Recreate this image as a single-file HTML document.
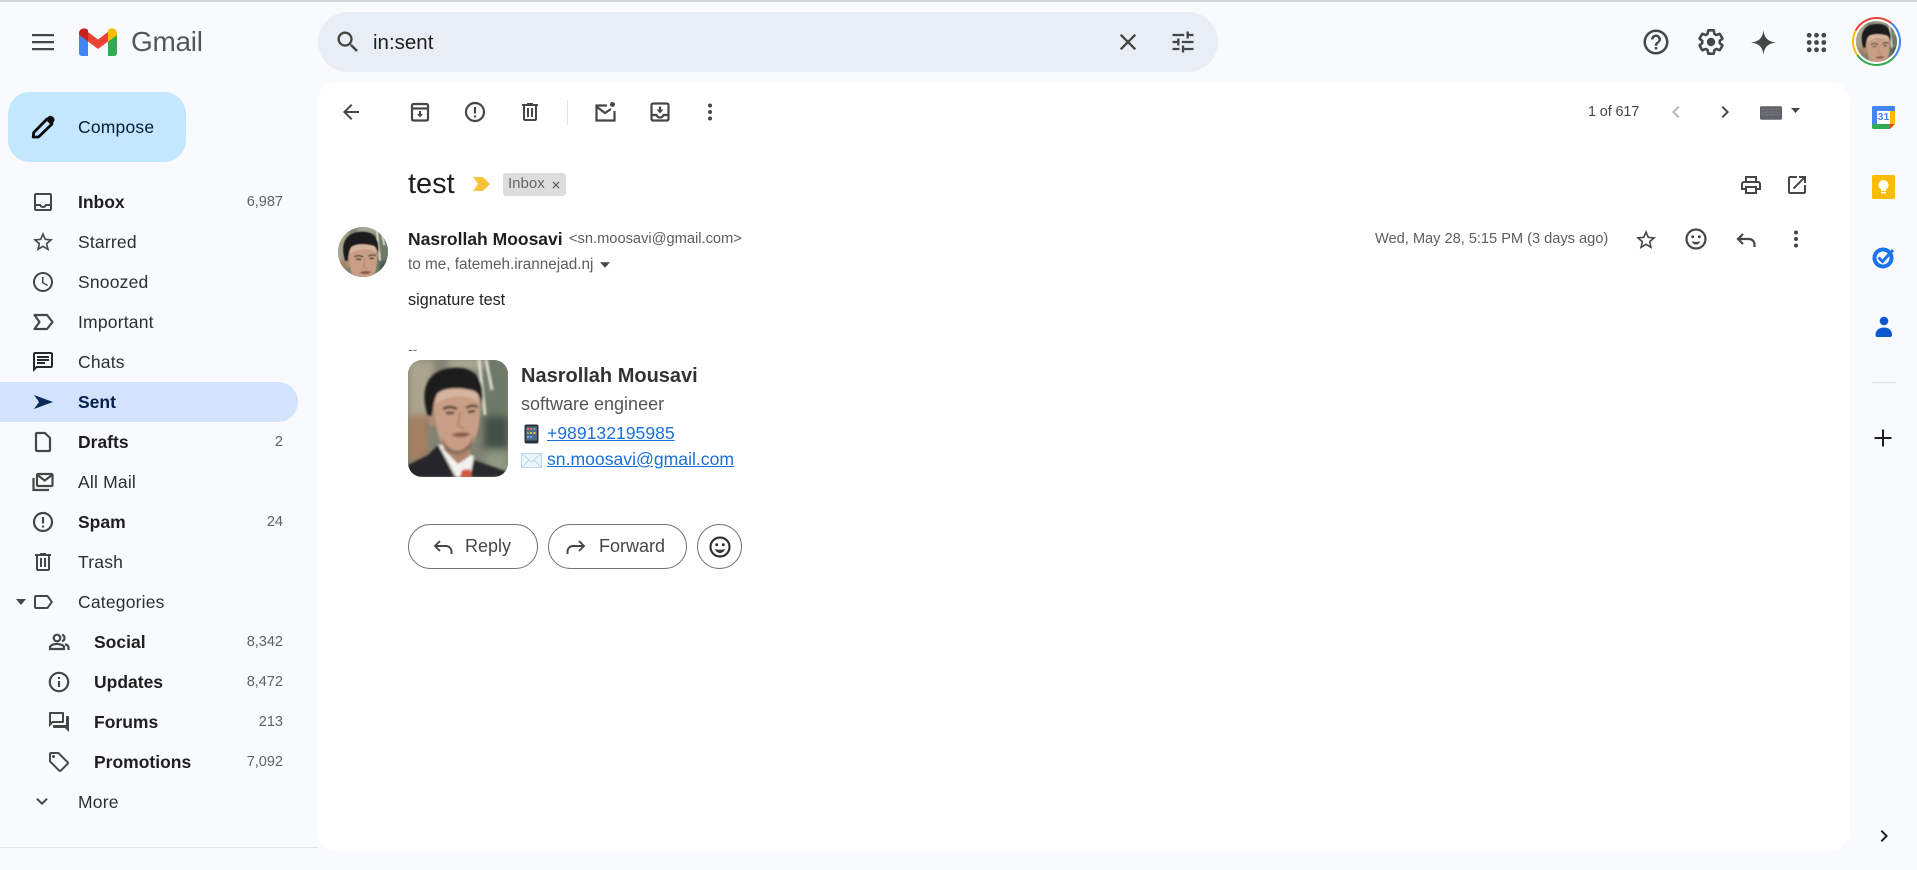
<!DOCTYPE html>
<html lang="en"><head><meta charset="utf-8"><title>Gmail</title>
<style>
html,body{margin:0;padding:0;width:1917px;height:870px;overflow:hidden;background:#f8fafd;font-family:"Liberation Sans",Arial,sans-serif;color:#1f1f1f}
#w{position:absolute;left:0;top:0;width:1917px;height:870px;overflow:hidden;filter:blur(.3px)}
.a{position:absolute}
svg.i{position:absolute;width:24px;height:24px;fill:#444746}
svg.s{fill:none;stroke:#444746;stroke-width:2.2}
.n{position:absolute;left:78px;height:40px;line-height:40px;font-size:17.5px;letter-spacing:.2px;color:#2c2e30;white-space:nowrap}
.b{font-weight:bold;letter-spacing:0;color:#1f1f1f}
.sub{left:94px}
.c{position:absolute;left:200px;width:83px;text-align:right;height:40px;line-height:40px;font-size:14.5px;color:#5f6368}
.g{position:absolute;white-space:nowrap;font-size:14.7px;color:#5e5e5e;line-height:20px}
.btn{position:absolute;top:524px;height:45px;box-sizing:border-box;border:1px solid #747775;border-radius:23px;background:#fff}
.bt{position:absolute;line-height:45px;top:524px;font-size:18px;color:#444746;white-space:nowrap}
a{color:#1a6fd8;text-decoration:underline}
</style></head><body><div id="w">
<svg width="0" height="0" style="position:absolute"><defs>
<filter id="bl"><feGaussianBlur stdDeviation="4"/></filter>
<filter id="bl2"><feGaussianBlur stdDeviation="1"/></filter>
<g id="face">
<rect width="100" height="117" fill="#7f8273"/>
<g filter="url(#bl)">
<rect x="0" y="0" width="26" height="55" fill="#aaa58e"/>
<rect x="0" y="55" width="20" height="45" fill="#a67f5e"/>
<rect x="40" y="0" width="40" height="8" fill="#b8b5a2"/>
<rect x="76" y="0" width="24" height="55" fill="#6c7868"/>
<rect x="76" y="56" width="24" height="34" fill="#3f4f46"/>
<rect x="78" y="90" width="22" height="27" fill="#8f9a82"/>
</g>
<g filter="url(#bl2)">
<path d="M71 0 L77 55 M78 0 L84 30" stroke="#e2dfd2" stroke-width="3" fill="none"/>
<path d="M0 105 L20 95 L30 85 L46 117 H0Z" fill="#25262a"/>
<path d="M66 100 L100 112 V117 H62Z" fill="#2a2b2e"/>
<path d="M30 84 L66 96 L62 117 H48Z" fill="#f4f2ef"/>
<path d="M52 117 L54 110 L62 109 L64 117Z" fill="#d5573c"/>
<path d="M34 80 H62 L62 96 L50 104 L36 90Z" fill="#b3866c"/>
<path d="M19 52 L25 50 L27 66 L22 67Z" fill="#b48a72"/>
<path d="M25 30 C30 20 66 18 72 32 C73 52 72 72 64 85 C56 96 44 96 36 87 C28 76 25 55 25 30Z" fill="#c89f85"/>
<path d="M28 28 C40 22 60 22 70 30 L70 42 C60 34 40 34 28 44Z" fill="#d6b59f"/>
<path d="M33 74 C40 96 58 96 66 74 L64 86 C56 97 44 97 36 88Z" fill="#8d6f5f"/>
<path d="M43 75 Q52 70 63 74 Q54 80 43 75Z" fill="#8a5a4c"/>
<path d="M35 49 Q42 45 49 49 M58 48 Q64 44 70 47" stroke="#3a2a22" stroke-width="2.2" fill="none"/>
<path d="M38 53 L46 53 M60 52 L67 51" stroke="#2b2019" stroke-width="2.2"/>
<path d="M52 52 L50 66 L56 68" stroke="#a97f68" stroke-width="1.5" fill="none"/>
<path d="M20 56 C12 34 16 10 44 8 C66 6 78 18 74 46 C72 36 70 31 62 30 C50 27 36 28 30 33 C26 38 25 48 24 56Z" fill="#1e1a1b"/>
</g>
</g>
</defs></svg>

<div class="a" style="left:0;top:0;width:1917px;height:2px;background:#d2d2d2"></div>

<!-- header -->
<svg class="i" style="left:31px;top:30px" viewBox="0 0 24 24"><path d="M1 4h22v2.300H1zM1 11h22v2.300H1zM1 18h22v2.300H1z"/></svg>
<svg class="a" style="left:79px;top:28px" width="38" height="28" viewBox="0 0 38 28">
<path fill="#4285f4" d="M0 7 L9 13.5 V28 H3 a3 3 0 0 1-3-3 Z"/>
<path fill="#34a853" d="M29 13.5 L38 7 V25 a3 3 0 0 1-3 3 H29 Z"/>
<path fill="#ea4335" d="M9 4 L19 11.5 L29 4 V13.5 L19 21 L9 13.5 Z"/>
<path fill="#c5221f" d="M0 7 V5 C0 1 5 -1 8 1.3 L9 2 V13.5 Z"/>
<path fill="#fbbc04" d="M29 2 L30 1.3 C33 -1 38 1 38 5 V7 L29 13.5 Z"/>
</svg>
<div class="a" style="left:131px;top:22px;line-height:40px;font-size:28px;color:#54585c;letter-spacing:-.3px">Gmail</div>

<div class="a" style="left:318px;top:12px;width:900px;height:60px;border-radius:30px;background:#e9eef6"></div>
<svg class="i" style="left:334px;top:28px;width:28px;height:28px" viewBox="0 0 24 24"><path d="M15.5 14h-.79l-.28-.27C15.41 12.59 16 11.11 16 9.5 16 5.91 13.09 3 9.5 3S3 5.91 3 9.5 5.91 16 9.5 16c1.61 0 3.09-.59 4.23-1.57l.27.28v.79l5 4.99L20.49 19l-4.99-5zm-6 0C7.01 14 5 11.99 5 9.5S7.01 5 9.5 5 14 7.01 14 9.5 11.99 14 9.5 14z"/></svg>
<div class="a" style="left:373px;top:23px;line-height:40px;font-size:20.5px;color:#1f1f1f">in:sent</div>
<svg class="i" style="left:1114px;top:28px;width:28px;height:28px" viewBox="0 0 24 24"><path d="M19 6.41L17.59 5 12 10.59 6.41 5 5 6.41 10.59 12 5 17.59 6.41 19 12 13.41 17.59 19 19 17.59 13.41 12z"/></svg>
<svg class="i" style="left:1169px;top:28px;width:28px;height:28px" viewBox="0 0 24 24"><path d="M3 17v2h6v-2H3zM3 5v2h10V5H3zm10 16v-2h8v-2h-8v-2h-2v6h2zM7 9v2H3v2h4v2h2V9H7zm14 4v-2H11v2h10zm-6-4h2V7h4V5h-4V3h-2v6z"/></svg>

<svg class="i" style="left:1641px;top:27px;width:30px;height:30px" viewBox="0 0 24 24"><path d="M11 18h2v-2h-2v2zm1-16C6.48 2 2 6.48 2 12s4.48 10 10 10 10-4.48 10-10S17.52 2 12 2zm0 18c-4.41 0-8-3.59-8-8s3.59-8 8-8 8 3.59 8 8-3.59 8-8 8zm0-14c-2.21 0-4 1.79-4 4h2c0-1.1.9-2 2-2s2 .9 2 2c0 2-3 1.75-3 5h2c0-2.25 3-2.5 3-5 0-2.21-1.79-4-4-4z"/></svg>
<svg class="i s" style="left:1697px;top:28px;width:28px;height:28px" viewBox="0 0 24 24"><path stroke-linejoin="round" d="M19.43 12.98c.04-.32.07-.64.07-.98s-.03-.66-.07-.98l2.11-1.65c.19-.15.24-.42.12-.64l-2-3.46c-.12-.22-.39-.3-.61-.22l-2.49 1c-.52-.4-1.08-.73-1.69-.98l-.38-2.65C14.46 2.18 14.25 2 14 2h-4c-.25 0-.46.18-.49.42l-.38 2.65c-.61.25-1.17.59-1.69.98l-2.49-1c-.23-.09-.49 0-.61.22l-2 3.46c-.13.22-.07.49.12.64l2.11 1.65c-.04.32-.07.65-.07.98s.03.66.07.98l-2.11 1.65c-.19.15-.24.42-.12.64l2 3.46c.12.22.39.3.61.22l2.49-1c.52.4 1.08.73 1.69.98l.38 2.65c.03.24.24.42.49.42h4c.25 0 .46-.18.49-.42l.38-2.65c.61-.25 1.17-.59 1.69-.98l2.49 1c.23.09.49 0 .61-.22l2-3.46c.12-.22.07-.49-.12-.64l-2.11-1.65z"/><circle cx="12" cy="12" r="3.600" fill="#444746" stroke="none"/></svg>
<svg class="i" style="left:1750.500px;top:29.500px;width:25px;height:25px" viewBox="0 0 24 24"><path d="M12 0 C12.800 7.500 16 11 24 12 C16 13 12.800 16.500 12 24 C11.200 16.500 8 13 0 12 C8 11 11.200 7.500 12 0Z"/></svg>
<svg class="i" style="left:1804px;top:30px;width:25px;height:25px" viewBox="0 0 24 24"><g><circle cx="5" cy="5" r="2.300"/><circle cx="12" cy="5" r="2.300"/><circle cx="19" cy="5" r="2.300"/><circle cx="5" cy="12" r="2.300"/><circle cx="12" cy="12" r="2.300"/><circle cx="19" cy="12" r="2.300"/><circle cx="5" cy="19" r="2.300"/><circle cx="12" cy="19" r="2.300"/><circle cx="19" cy="19" r="2.300"/></g></svg>
<div class="a" style="left:1852px;top:17px;width:49px;height:49px;border-radius:50%;background:conic-gradient(#ea4335 0 38deg,#4285f4 38deg 130deg,#34a853 130deg 235deg,#fbbc04 235deg 298deg,#ea4335 298deg)"></div>
<div class="a" style="left:1854px;top:19px;width:45px;height:45px;border-radius:50%;background:#fff"></div>
<svg class="a" style="left:1856px;top:21px;border-radius:50%" width="41" height="41" viewBox="5 2 82 82"><use href="#face"/></svg>

<!-- compose -->
<div class="a" style="left:8px;top:92px;width:178px;height:70px;border-radius:22px;background:#c2e7ff"></div>
<svg class="a" style="left:30px;top:114px" width="26" height="26" viewBox="0 0 26 26"><path d="M3.200 23 L3.700 18.500 L17 5 L22 10 L8.500 23 Z" fill="none" stroke="#0b0b0b" stroke-width="2.800" stroke-linejoin="round"/><path d="M16 5 L19 2 Q21 1.200 22.500 2.500 L24 4 Q25 6 24 7.500 L21.500 11Z" fill="#0b0b0b"/></svg>
<div class="a" style="left:78px;top:107px;line-height:40px;font-size:17.5px;letter-spacing:.2px;color:#001d35">Compose</div>

<!-- nav -->
<div class="a" style="left:0;top:382px;width:298px;height:40px;border-radius:0 20px 20px 0;background:#d3e3fd"></div>

<svg class="i" style="left:31px;top:190px" viewBox="0 0 24 24"><path d="M19 3H5c-1.1 0-2 .9-2 2v14c0 1.1.9 2 2 2h14c1.1 0 2-.9 2-2V5c0-1.1-.9-2-2-2zm0 16H5v-3h3.56c.69 1.19 1.97 2 3.44 2s2.75-.81 3.44-2H19v3zm0-5h-4.99c0 1.1-.9 2-2 2s-2-.9-2-2H5V5h14v9z"/></svg>
<div class="n b" style="top:182px">Inbox</div><div class="c" style="top:182px">6,987</div>
<svg class="i" style="left:31px;top:230px" viewBox="0 0 24 24"><path d="M22 9.24l-7.19-.62L12 2 9.19 8.63 2 9.24l5.46 4.73L5.82 21 12 17.27 18.18 21l-1.63-7.03L22 9.24zM12 15.4l-3.76 2.27 1-4.28-3.32-2.88 4.38-.38L12 6.1l1.71 4.04 4.38.38-3.32 2.88 1 4.28L12 15.4z"/></svg>
<div class="n" style="top:222px">Starred</div>
<svg class="i" style="left:31px;top:270px" viewBox="0 0 24 24"><path d="M11.99 2C6.47 2 2 6.48 2 12s4.47 10 9.99 10C17.52 22 22 17.52 22 12S17.52 2 11.99 2zM12 20c-4.42 0-8-3.58-8-8s3.58-8 8-8 8 3.58 8 8-3.58 8-8 8zm.5-13H11v6l5.25 3.15.75-1.23-4.5-2.67z"/></svg>
<div class="n" style="top:262px">Snoozed</div>
<svg class="i s" style="left:31px;top:310px" viewBox="0 0 24 24"><path d="M3.500 5 H16 L21.500 12 L16 19 H3.500 L8.500 12 Z" stroke-linejoin="round"/></svg>
<div class="n" style="top:302px">Important</div>
<svg class="i" style="left:31px;top:350px;fill:#26282a" viewBox="0 0 24 24"><path d="M20 2H4c-1.1 0-2 .9-2 2v18l4-4h14c1.1 0 2-.9 2-2V4c0-1.1-.9-2-2-2zm0 14H5.17L4 17.17V4h16v12zM6 12h8v2H6zm0-3h12v2H6zm0-3h12v2H6z"/></svg>
<div class="n" style="top:342px">Chats</div>
<svg class="i" style="left:31px;top:390px;fill:#0b2a57" viewBox="0 0 24 24"><path d="M3 5 L22 12 L3 19 L8 12 Z"/></svg>
<div class="n b" style="top:382px;color:#041e49">Sent</div>
<svg class="i s" style="left:31px;top:430px" viewBox="0 0 24 24"><path d="M6 3h8l5 5v12a1 1 0 0 1-1 1H6a1 1 0 0 1-1-1V4a1 1 0 0 1 1-1z" stroke-linejoin="round"/></svg>
<div class="n b" style="top:422px">Drafts</div><div class="c" style="top:422px">2</div>
<svg class="i s" style="left:31px;top:470px" viewBox="0 0 24 24"><rect x="6" y="4" width="15.500" height="12" rx="1"/><path d="M6.500 5 L13.700 10.500 L21 5"/><path d="M2.500 8 V20 H18"/></svg>
<div class="n" style="top:462px">All Mail</div>
<svg class="i s" style="left:31px;top:510px" viewBox="0 0 24 24"><circle cx="12" cy="12" r="9"/><path d="M12 7v6.500M12 15.500v2"/></svg>
<div class="n b" style="top:502px">Spam</div><div class="c" style="top:502px">24</div>
<svg class="i" style="left:31px;top:550px" viewBox="0 0 24 24"><path d="M15 4V3H9v1H4v2h1v13c0 1.1.9 2 2 2h10c1.1 0 2-.9 2-2V6h1V4h-5zm2 15H7V6h10v13zM9 8h2v9H9zm4 0h2v9h-2z"/></svg>
<div class="n" style="top:542px">Trash</div>
<svg class="a" style="left:16px;top:599px" width="10" height="6" viewBox="0 0 10 6"><path d="M0 0H10L5 6Z" fill="#444746"/></svg>
<svg class="i" style="left:31px;top:590px" viewBox="0 0 24 24"><path d="M17.63 5.84C17.27 5.33 16.67 5 16 5L5 5.01C3.9 5.01 3 5.9 3 7v10c0 1.1.9 1.99 2 1.99L16 19c.67 0 1.27-.33 1.63-.84L22 12l-4.37-6.16zM16 17H5V7h11l3.55 5L16 17z"/></svg>
<div class="n" style="top:582px">Categories</div>
<svg class="i s" style="left:47px;top:630px" viewBox="0 0 24 24"><circle cx="10" cy="8" r="3.300"/><path d="M3 19 v-1.500 c0-2.500 4-3.500 7-3.500 s7 1 7 3.500 V19 Z"/><path d="M15 4.800a3.300 3.300 0 0 1 0 6.400M18 14.200c2 .6 3.500 1.600 3.500 3.300V20"/></svg>
<div class="n b sub" style="top:622px">Social</div><div class="c" style="top:622px">8,342</div>
<svg class="i s" style="left:47px;top:670px" viewBox="0 0 24 24"><circle cx="12" cy="12" r="9.200"/><path d="M12 11v6M12 7v2"/></svg>
<div class="n b sub" style="top:662px">Updates</div><div class="c" style="top:662px">8,472</div>
<svg class="i" style="left:47px;top:710px" viewBox="0 0 24 24"><path d="M15 4v7H5.17L4 12.17V4h11m1-2H3c-.55 0-1 .45-1 1v14l4-4h10c.55 0 1-.45 1-1V3c0-.55-.45-1-1-1zm5 4h-2v9H6v2c0 .55.45 1 1 1h11l4 4V7c0-.55-.45-1-1-1z"/></svg>
<div class="n b sub" style="top:702px">Forums</div><div class="c" style="top:702px">213</div>
<svg class="i" style="left:47px;top:750px" viewBox="0 0 24 24"><path d="M21.41 11.58l-9-9C12.05 2.22 11.55 2 11 2H4c-1.1 0-2 .9-2 2v7c0 .55.22 1.05.59 1.42l9 9c.36.36.86.58 1.41.58s1.05-.22 1.41-.59l7-7c.37-.36.59-.86.59-1.41s-.23-1.06-.59-1.42zM13 20.01L4 11V4h7v-.01l9 9-7 7.02z"/><circle cx="6.500" cy="6.500" r="1.500"/></svg>
<div class="n b sub" style="top:742px">Promotions</div><div class="c" style="top:742px">7,092</div>
<svg class="i s" style="left:31px;top:790px;width:22px;height:22px" viewBox="0 0 24 24"><path d="M6.500 9.500 L12 15 L17.500 9.500"/></svg>
<div class="n" style="top:782px">More</div>
<div class="a" style="left:0;top:847px;width:318px;height:1px;background:#e3e5e8"></div>

<!-- main card -->
<div class="a" style="left:318px;top:82px;width:1531px;height:769px;background:#fff;border-radius:18px"></div>

<!-- toolbar -->
<svg class="i" style="left:339px;top:100px" viewBox="0 0 24 24"><path d="M20 11H7.83l5.59-5.59L12 4l-8 8 8 8 1.41-1.41L7.83 13H20v-2z"/></svg>
<svg class="i s" style="left:408px;top:100px" viewBox="0 0 24 24"><rect x="4" y="4" width="16" height="16.500" rx="1.500"/><path d="M4 8.500h16"/><path d="M12 11v4"/><path d="M9 14 h6 l-3 3.500z" fill="#444746" stroke="none"/></svg>
<svg class="i s" style="left:463px;top:100px" viewBox="0 0 24 24"><circle cx="12" cy="12" r="9"/><path d="M12 7v6.500M12 15.500v2"/></svg>
<svg class="i" style="left:518px;top:100px" viewBox="0 0 24 24"><path d="M15 4V3H9v1H4v2h1v13c0 1.1.9 2 2 2h10c1.100 0 2-.9 2-2V6h1V4h-5zm2 15H7V6h10v13zM9 8h2v9H9zm4 0h2v9h-2z"/></svg>
<div class="a" style="left:567px;top:100px;width:1px;height:25px;background:#e3e3e3"></div>
<svg class="i s" style="left:593px;top:100px" viewBox="0 0 24 24"><path d="M14 5.500H3.500v15h18V11"/><path d="M4 7 L12 13 L18 9"/><circle cx="19.500" cy="4.500" r="2.500" fill="#444746" stroke="none"/></svg>
<svg class="i s" style="left:648px;top:100px" viewBox="0 0 24 24"><rect x="3.500" y="3.500" width="17" height="17" rx="1.500"/><path d="M4 15h4.500c.5 1.500 2 2.500 3.500 2.500s3-1 3.500-2.500H20"/><path d="M12 6.500v4"/><path d="M8.500 9.500h7l-3.500 4z" fill="#444746" stroke="none"/></svg>
<svg class="i" style="left:698px;top:100px" viewBox="0 0 24 24"><circle cx="12" cy="5.500" r="2"/><circle cx="12" cy="12" r="2"/><circle cx="12" cy="18.500" r="2"/></svg>

<div class="g" style="left:1588px;top:102px;font-size:14.400px;color:#444746;letter-spacing:-.1px">1 of 617</div>
<svg class="i" style="left:1664px;top:100px;fill:#b4b6b8" viewBox="0 0 24 24"><path d="M15.400 7.400 14 6l-6 6 6 6 1.400-1.400L10.800 12z"/></svg>
<svg class="i" style="left:1713px;top:100px" viewBox="0 0 24 24"><path d="M8.600 7.400 10 6l6 6-6 6-1.400-1.400L13.200 12z"/></svg>
<svg class="a" style="left:1760px;top:106px" width="22" height="14" viewBox="0 0 23 14"><rect width="23" height="14" rx="1.500" fill="#5f6368"/><path d="M2 3h19M2 6h19M2 9h19" stroke="#8a8d90" stroke-width="1" stroke-dasharray="1.500 1"/></svg>
<svg class="a" style="left:1791px;top:108px" width="9" height="5" viewBox="0 0 11 6"><path d="M0 0H11L5.500 6Z" fill="#444746"/></svg>

<!-- subject -->
<div class="a" style="left:408px;top:164px;line-height:40px;font-size:29px;color:#1f1f1f">test</div>
<svg class="a" style="left:473px;top:177px" width="17" height="14" viewBox="0 0 17 14"><path d="M0 0 H10 L17 7 L10 14 H0 L5 7 Z" fill="#f8c33a"/></svg>
<div class="a" style="left:503px;top:173px;width:63px;height:23px;background:#dddddd;border-radius:3px"></div>
<div class="a" style="left:508px;top:173px;line-height:22px;font-size:15px;color:#666">Inbox</div>
<svg class="a" style="left:552px;top:181px" width="8" height="8" viewBox="0 0 9 9"><path d="M1 1L8 8M8 1L1 8" stroke="#555" stroke-width="1.300"/></svg>

<svg class="i" style="left:1739px;top:173px" viewBox="0 0 24 24"><path d="M19 8h-1V3H6v5H5c-1.660 0-3 1.340-3 3v6h4v4h12v-4h4v-6c0-1.660-1.340-3-3-3zM8 5h8v3H8V5zm8 12v2H8v-4h8v2zm2-2v-2H6v2H4v-4c0-.55.45-1 1-1h14c.55 0 1 .45 1 1v4h-2z"/></svg>
<svg class="i" style="left:1785px;top:173px" viewBox="0 0 24 24"><path d="M19 19H5V5h7V3H5c-1.110 0-2 .9-2 2v14c0 1.100.89 2 2 2h14c1.100 0 2-.9 2-2v-7h-2v7zM14 3v2h3.590l-9.830 9.830 1.410 1.410L19 6.410V10h2V3h-7z"/></svg>

<!-- sender -->
<svg class="a" style="left:338px;top:227px;border-radius:50%" width="50" height="50" viewBox="8 0 82 82"><use href="#face"/></svg>
<div class="a" style="left:408px;top:229px;line-height:20px;font-size:17.500px;font-weight:bold;color:#1f1f1f;white-space:nowrap">Nasrollah Moosavi</div>
<div class="g" style="left:569px;top:229px;font-size:14.700px;letter-spacing:-.02px">&lt;sn.moosavi@gmail.com&gt;</div>
<div class="g" style="left:408px;top:255px;font-size:15.300px">to me, fatemeh.irannejad.nj</div>
<svg class="a" style="left:600px;top:262px" width="10" height="6" viewBox="0 0 11 6"><path d="M0 0H11L5.500 6Z" fill="#444746"/></svg>

<div class="g" style="left:1375px;top:229px;color:#5e5e5e;letter-spacing:-.05px">Wed, May 28, 5:15 PM (3 days ago)</div>
<svg class="i" style="left:1634px;top:228px" viewBox="0 0 24 24"><path d="M22 9.240l-7.190-.62L12 2 9.190 8.630 2 9.240l5.460 4.730L5.820 21 12 17.270 18.180 21l-1.630-7.030L22 9.240zM12 15.400l-3.760 2.270 1-4.280-3.320-2.880 4.380-.38L12 6.100l1.710 4.040 4.380.38-3.320 2.880 1 4.280L12 15.400z"/></svg>
<svg class="i s" style="left:1684px;top:227px" viewBox="0 0 24 24"><circle cx="12" cy="12" r="9.500"/><circle cx="8.700" cy="9.700" r="1.500" fill="#444746" stroke="none"/><circle cx="15.300" cy="9.700" r="1.500" fill="#444746" stroke="none"/><path d="M7.500 14.200 Q12 15.500 16.500 14.200 Q15 17.500 12 17.500 Q9 17.500 7.500 14.200Z" fill="#444746" stroke="none"/></svg>
<svg class="i s" style="left:1734px;top:228px" viewBox="0 0 24 24"><path d="M9 6 L4 11 L9 16"/><path d="M4 11 H15 a5.500 5.500 0 0 1 5.500 5.500 V19"/></svg>
<svg class="i" style="left:1784px;top:227px" viewBox="0 0 24 24"><circle cx="12" cy="5.500" r="2"/><circle cx="12" cy="12" r="2"/><circle cx="12" cy="18.500" r="2"/></svg>

<!-- body -->
<div class="a" style="left:408px;top:290px;line-height:20px;font-size:16.200px;color:#222">signature test</div>
<div class="a" style="left:408px;top:339px;line-height:20px;font-size:14px;color:#777">--</div>
<svg class="a" style="left:408px;top:360px;border-radius:14px" width="100" height="117" viewBox="0 0 100 117"><use href="#face"/></svg>
<div class="a" style="left:521px;top:366px;line-height:20px;font-size:20px;font-weight:bold;color:#333;white-space:nowrap">Nasrollah Mousavi</div>
<div class="a" style="left:521px;top:394px;line-height:20px;font-size:18px;color:#555;white-space:nowrap">software engineer</div>
<svg class="a" style="left:524px;top:424px" width="15" height="20" viewBox="0 0 15 20"><rect x=".5" y=".5" width="14" height="19" rx="2" fill="#2b3036"/><rect x="2" y="2.500" width="11" height="14" fill="#4c6a86"/><path d="M3 4h2v2H3zM6 4h2v2H6z" fill="#e66"/><path d="M9.500 4h2v2h-2zM3 8h2v2H3z" fill="#5b9"/><path d="M6 8h2v2H6zM9.500 8h2v2h-2z" fill="#fb4"/><path d="M3 12h2v2H3zM6 12h2v2H6z" fill="#6af"/></svg>
<div class="a" style="left:547px;top:423px;line-height:20px;font-size:17.600px;white-space:nowrap"><a>+989132195985</a></div>
<svg class="a" style="left:521px;top:453px" width="21" height="15" viewBox="0 0 21 15"><rect x=".5" y=".5" width="20" height="14" fill="#eaf4fb" stroke="#b9d8ec"/><path d="M1 1 L10.500 9 L20 1 M1 14 L8 7 M20 14 L13 7" fill="none" stroke="#b9d8ec"/></svg>
<div class="a" style="left:547px;top:449px;line-height:20px;font-size:17.600px;white-space:nowrap"><a>sn.moosavi@gmail.com</a></div>

<!-- buttons -->
<div class="btn" style="left:408px;width:130px"></div>
<svg class="i s" style="left:431px;top:535px;stroke-width:1.900" viewBox="0 0 24 24"><path d="M9 6 L4 11 L9 16"/><path d="M4 11 H15 a5.500 5.500 0 0 1 5.500 5.500 V19"/></svg>
<div class="bt" style="left:465px">Reply</div>
<div class="btn" style="left:548px;width:139px"></div>
<svg class="i s" style="left:564px;top:535px;stroke-width:1.900" viewBox="0 0 24 24"><path d="M15 6 L20 11 L15 16"/><path d="M20 11 H9 a5.500 5.500 0 0 0-5.500 5.500 V19"/></svg>
<div class="bt" style="left:599px">Forward</div>
<div class="btn" style="left:697px;width:45px"></div>
<svg class="i s" style="left:707.500px;top:534.500px;stroke:#333" viewBox="0 0 24 24"><circle cx="12" cy="12" r="9.500"/><circle cx="8.700" cy="9.700" r="1.500" fill="#333" stroke="none"/><circle cx="15.300" cy="9.700" r="1.500" fill="#333" stroke="none"/><path d="M7 14 Q12 15.500 17 14 Q15.500 18 12 18 Q8.500 18 7 14Z" fill="#333" stroke="none"/></svg>

<!-- right rail -->
<div class="a" style="left:1872px;top:106px;width:23px;height:23px;background:#fff"></div>
<svg class="a" style="left:1872px;top:106px" width="23" height="23" viewBox="0 0 23 23">
<path fill="#4285f4" d="M1.500 0H21.500A1.500 1.500 0 0 1 23 1.500V5H5V18H0V1.500A1.500 1.500 0 0 1 1.500 0Z"/>
<path fill="#fbbc04" d="M18 5H23V18H18Z"/>
<path fill="#34a853" d="M0 18H18V23H1.500A1.500 1.500 0 0 1 0 21.500Z"/>
<path fill="#ea4335" d="M18 18H23L18 23Z"/>
</svg>
<div class="a" style="left:1877px;top:111px;width:13px;line-height:13px;font-size:10.500px;font-weight:bold;text-align:center;color:#4285f4">31</div>
<div class="a" style="left:1872px;top:175px;width:23px;height:24px;border-radius:2px;background:#fbbc04"></div>
<svg class="a" style="left:1872px;top:175px" width="23" height="24" viewBox="0 0 23 24"><circle cx="11.500" cy="10" r="5" fill="#fff"/><rect x="9" y="13" width="5" height="3" fill="#fff"/><rect x="9" y="17" width="5" height="1.500" fill="#fff"/></svg>
<svg class="a" style="left:1872px;top:245px" width="24" height="24" viewBox="0 0 24 24"><circle cx="11" cy="13" r="8.500" fill="none" stroke="#1a73e8" stroke-width="4"/><path d="M6.500 12.500 L10.500 16.500 L21 5" fill="none" stroke="#1a73e8" stroke-width="3"/></svg>
<svg class="a" style="left:1873px;top:315px" width="22" height="24" viewBox="0 0 22 24"><circle cx="11" cy="6" r="4.300" fill="#0b57d0"/><path d="M4.500 22 a2 2 0 0 1-2-2 c0-5 4-7.500 8.500-7.500 s8 2.500 8 7.500 a2 2 0 0 1-2 2Z" fill="#0b57d0"/></svg>
<div class="a" style="left:1872px;top:382px;width:24px;height:1px;background:#dadce0"></div>
<svg class="a" style="left:1873px;top:428px" width="20" height="20" viewBox="0 0 20 20"><path d="M1.500 10H18.500M10 1.500V18.500" stroke="#1f1f1f" stroke-width="2"/></svg>
<svg class="i" style="left:1872px;top:824px;fill:#1f1f1f" viewBox="0 0 24 24"><path d="M8.600 7.400 10 6l6 6-6 6-1.400-1.400L13.200 12z"/></svg>
</div></body></html>
